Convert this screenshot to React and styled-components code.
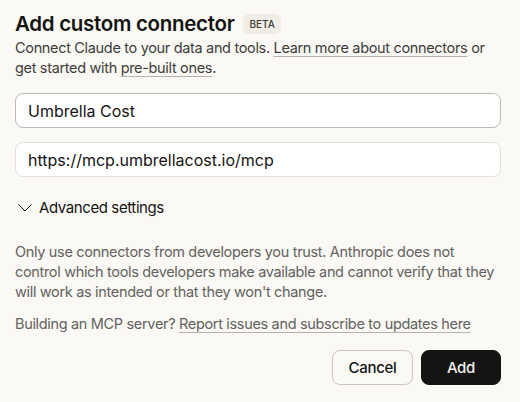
import styled, { createGlobalStyle } from "styled-components";

const GlobalStyle = createGlobalStyle`
  html, body {
    margin: 0;
    padding: 0;
    background: #faf9f5;
  }
  body {
    font-family: Inter, "Noto Sans", sans-serif;
    color: #141413;
  }
`;

const Dialog = styled.div`
  width: 486px;
  padding: 9px 19px 16px 15px;
  display: flex;
  flex-direction: column;
`;

const TitleRow = styled.div`
  display: flex;
  align-items: center;
  gap: 9px;
`;

const Title = styled.h2`
  margin: 0;
  font-size: 20.5px;
  font-weight: 600;
  line-height: 29px;
  letter-spacing: -0.3px;
`;

const Badge = styled.span`
  font-size: 10px;
  font-weight: 500;
  line-height: 20px;
  padding: 0 6px;
  border-radius: 6px;
  background: #efede6;
  color: #3d3d3a;
`;

const Text = styled.p`
  margin: ${(p) => p.$margin || "0"};
  font-size: 14.5px;
  line-height: 20px;
  letter-spacing: -0.33px;
  color: ${(p) => (p.$muted ? "#63625d" : "#3d3d3a")};
`;

const Link = styled.a`
  color: inherit;
  text-decoration: underline;
  text-decoration-color: #b5b3ab;
  text-underline-offset: 3px;
  text-decoration-thickness: 1px;
`;

const Input = styled.input`
  box-sizing: border-box;
  width: 100%;
  height: 35px;
  margin-top: ${(p) => p.$top || "0"};
  padding: 0 12px;
  border: 1px solid ${(p) => (p.$focused ? "#bdbbb3" : "#e3e1da")};
  border-radius: 8px;
  background: #ffffff;
  font-family: inherit;
  font-size: 16px;
  color: #141413;
  outline: none;
`;

const Toggle = styled.button`
  display: flex;
  align-items: center;
  gap: 7px;
  margin-top: 20px;
  padding: 0 3px;
  border: none;
  background: none;
  font-family: inherit;
  font-size: 15px;
  letter-spacing: -0.4px;
  color: #141413;
  line-height: 22px;
  cursor: pointer;
`;

const Actions = styled.div`
  display: flex;
  justify-content: flex-end;
  gap: 8px;
  margin-top: 16px;
`;

const Button = styled.button`
  box-sizing: border-box;
  width: ${(p) => p.$width};
  height: 35px;
  border-radius: 8px;
  font-family: inherit;
  font-size: 15px;
  font-weight: 500;
  letter-spacing: -0.3px;
  cursor: pointer;
  border: 1px solid ${(p) => (p.$primary ? "#141413" : "#c9c7bf")};
  background: ${(p) => (p.$primary ? "#141413" : "transparent")};
  color: ${(p) => (p.$primary ? "#f2f0ea" : "#141413")};
`;

function Chevron() {
  return (
    <svg width="14" height="14" viewBox="0 0 14 14" fill="none">
      <path d="M0.7 3.6L7 10L13.3 3.6" stroke="#141413" strokeWidth="1" strokeLinecap="round" strokeLinejoin="round" />
    </svg>
  );
}

export default function App() {
  return (
    <>
      <GlobalStyle />
      <Dialog>
        <TitleRow>
          <Title>Add custom connector</Title>
          <Badge>BETA</Badge>
        </TitleRow>
        <Text>
          Connect Claude to your data and tools. <Link>Learn more about connectors</Link> or get
          started with <Link>pre-built ones</Link>.
        </Text>
        <Input $top="15px" $focused defaultValue="Umbrella Cost" />
        <Input $top="14px" defaultValue="https://mcp.umbrellacost.io/mcp" />
        <Toggle>
          <Chevron />
          Advanced settings
        </Toggle>
        <Text $muted $margin="23px 0 0">
          Only use connectors from developers you trust. Anthropic does not control which tools
          developers make available and cannot verify that they will work as intended or that they
          won't change.
        </Text>
        <Text $muted $margin="12px 0 0">
          Building an MCP server? <Link>Report issues and subscribe to updates here</Link>
        </Text>
        <Actions>
          <Button $width="81px">Cancel</Button>
          <Button $primary $width="80px">Add</Button>
        </Actions>
      </Dialog>
    </>
  );
}
